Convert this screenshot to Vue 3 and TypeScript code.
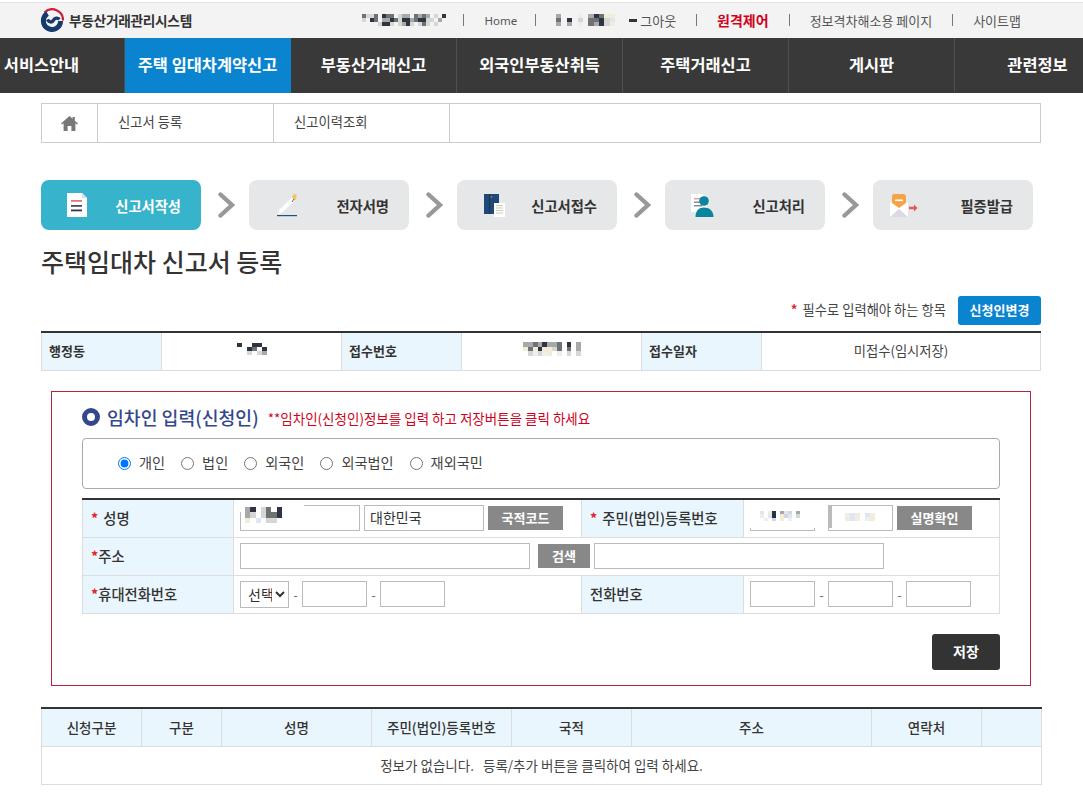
<script setup lang="ts">
interface Cell { x: number; y: number; c: string }
const palette: Record<string, string> = {
  a: '#2f3540', b: '#6f7275', c: '#a8a8a8', d: '#d6d6d6', e: '#f3ecd9', f: '#dde7f3', g: '#1f2f55', h: '#eeeeee'
}
function mosaic(rows: string[]): Cell[] {
  const out: Cell[] = []
  rows.forEach((r, y) => {
    r.split('').forEach((ch, x) => {
      if (palette[ch]) out.push({ x, y, c: palette[ch] })
    })
  })
  return out
}
const m1 = mosaic(['bddb.abb.dcc.bcbc.d.a', 'd.ab.ccabdaacbaadd.c.', '....daad.dcad.dbd.d..'])
const m2 = mosaic(['c...h.cabee..', 'b.a.d.bbadf..', 'c.c.h.bcade..'])
const m3 = mosaic(['a..aa.', '..ab.a', '..d.dc'])
const m4 = mosaic(['ccbcaccb.a.c', 'ebeaeedb.b.c', '.dhdhe.h.d.d'])
const m5 = mosaic(['ca.db.a.', 'cd.dbba.', 'e.f.dd..'])
const m6 = mosaic(['f.ea.cfd.c.', 'e.fg.edf.d.', '.h.d.e.h...'])
const m7 = mosaic(['.hfe.fe.', '.efh.he.'])

const topLinks = ['Home']
const navItems = ['서비스안내', '주택 임대차계약신고', '부동산거래신고', '외국인부동산취득', '주택거래신고', '게시판', '관련정보']
const steps = [
  { label: '신고서작성', pad: 'p1' },
  { label: '전자서명', pad: 'p2' },
  { label: '신고서접수', pad: 'p3' },
  { label: '신고처리', pad: 'p4' },
  { label: '필증발급', pad: 'p5' }
]
const radios = [
  { label: '개인', checked: true },
  { label: '법인', checked: false },
  { label: '외국인', checked: false },
  { label: '외국법인', checked: false },
  { label: '재외국민', checked: false }
]
const listCols = ['신청구분', '구분', '성명', '주민(법인)등록번호', '국적', '주소', '연락처', '']
const listWidths = [100, 80, 150, 140, 120, 240, 110, 60]
</script>

<template>
  <div class="page">
    <header class="top">
      <div class="logo">
        <svg width="24" height="24" viewBox="0 0 24 24">
          <path d="M4.5 4.5A10.8 10.8 0 0 1 23 12.5" fill="none" stroke="#c8213f" stroke-width="2.2" />
          <path d="M7.5 5.5A8.6 8.6 0 1 0 20.6 13" fill="none" stroke="#163a6b" stroke-width="5" />
          <path d="M7.5 11.5C9.5 15 12.6 14.4 13.8 11.8C14.8 9.8 17.6 9.4 19.4 11.4" fill="none" stroke="#163a6b" stroke-width="3.4" />
        </svg>
        <span>부동산거래관리시스템</span>
      </div>
      <nav class="links">
        <svg class="mos" width="84" height="12" viewBox="0 0 21 3" preserveAspectRatio="none" shape-rendering="crispEdges">
          <rect v-for="(p, i) in m1" :key="i" :x="p.x" :y="p.y" width="1" height="1" :fill="p.c" />
        </svg>
        <i class="sep first"></i>
        <a v-for="l in topLinks" :key="l" class="home">{{ l }}</a>
        <i class="sep"></i>
        <span class="logout">
          <svg class="mos" width="70" height="12" viewBox="0 0 13 3" preserveAspectRatio="none" shape-rendering="crispEdges">
            <rect v-for="(p, i) in m2" :key="i" :x="p.x" :y="p.y" width="1" height="1" :fill="p.c" />
          </svg>
          <b class="bar"></b>
          <a>그아웃</a>
        </span>
        <i class="sep"></i>
        <a class="remote">원격제어</a>
        <i class="sep"></i>
        <a>정보격차해소용 페이지</a>
        <i class="sep"></i>
        <a class="last">사이트맵</a>
      </nav>
    </header>

    <div class="navwrap">
      <ul class="nav">
        <li v-for="(n, i) in navItems" :key="n" :class="{ active: i === 1 }">{{ n }}</li>
      </ul>
    </div>

    <main class="main">
      <div class="tabs">
        <div class="tab home-tab">
          <svg width="17" height="15" viewBox="0 0 17 15">
            <path d="M8.5 0L0 7.6L1 8.6L2.6 7.3V15H6.6V10H10.4V15H14.4V7.3L16 8.6L17 7.6L13.8 4.8V1H11.6V2.8Z" fill="#777" />
          </svg>
        </div>
        <div class="tab">신고서 등록</div>
        <div class="tab">신고이력조회</div>
      </div>

      <div class="steps">
        <template v-for="(s, i) in steps" :key="s.label">
          <div class="step" :class="[{ on: i === 0 }, s.pad]">
            <svg width="40" height="30" viewBox="0 0 40 30">
              <g v-if="i === 0">
                <path d="M10 3H25L30 8V27H10Z" fill="#fff" />
                <path d="M25 3L30 8H25Z" fill="#dcdcdc" />
                <rect x="14" y="10" width="11" height="1.8" fill="#e8757a" />
                <rect x="14" y="15" width="11" height="1.8" fill="#4a4f60" />
                <rect x="14" y="19.5" width="11" height="1.8" fill="#33384a" />
              </g>
              <g v-else-if="i === 1">
                <path d="M14 20L27 7.5L30 10.5L17 22.5L13 24Z" fill="#fff" />
                <path d="M27 7.5L29 3.5L32 6L30 10.5Z" fill="#f3c64d" />
                <path d="M29 9L27 12" stroke="#2b3a55" stroke-width="0.8" />
                <rect x="12" y="25" width="20" height="1.2" fill="#24507e" />
              </g>
              <g v-else-if="i === 2">
                <rect x="11" y="4" width="15" height="20" fill="#1f4a78" />
                <rect x="16" y="4" width="1" height="20" fill="#163659" />
                <circle cx="18.5" cy="7" r="0.9" fill="#c9605f" />
                <rect x="21" y="13" width="11" height="14" fill="#fff" />
                <path d="M23 15.5H30M23 18H30M23 20.5H30M23 23H30" stroke="#c9c4a8" stroke-width="0.9" />
              </g>
              <g v-else-if="i === 3">
                <path d="M10 4H21L26 9V22H10Z" fill="#fff" />
                <rect x="13" y="8" width="7" height="1.4" fill="#e49aa0" />
                <rect x="13" y="11.5" width="8" height="1.4" fill="#7c8494" />
                <rect x="13" y="15" width="8" height="1.4" fill="#7c8494" />
                <circle cx="23" cy="11" r="4.8" fill="#0b84a0" />
                <path d="M14.5 27C14.5 20.5 18 17.5 23 17.5C28 17.5 32.5 20.5 32.5 27Z" fill="#0b84a0" />
              </g>
              <g v-else>
                <path d="M1 13L10 7L19 13V27H1Z" fill="#fff" />
                <path d="M1 27L10 19L19 27Z" fill="#dcd8e4" />
                <path d="M3 6C3 4 5 4 7 4H14C16 4 17 5 17 7V13L10 18L3 13Z" fill="#f5a345" />
                <rect x="6" y="9.5" width="8" height="1.6" fill="#fff" />
                <path d="M20 16.8H25V14.5L28.5 18L25 21.5V19.2H20Z" fill="#e8555f" />
              </g>
            </svg>
            <span>{{ s.label }}</span>
          </div>
          <div v-if="i < steps.length - 1" class="arrow">
            <svg width="17" height="26" viewBox="0 0 17 26">
              <path d="M2.5 2.5L14 13L2.5 23.5" fill="none" stroke="#999" stroke-width="4.4" stroke-linecap="round" stroke-linejoin="miter" />
            </svg>
          </div>
        </template>
      </div>

      <h1 class="title">주택임대차 신고서 등록</h1>

      <div class="req">
        <span><em>*</em> 필수로 입력해야 하는 항목</span>
        <button class="blue">신청인변경</button>
      </div>

      <table class="info">
        <colgroup>
          <col style="width:120px" /><col style="width:180px" /><col style="width:120px" />
          <col style="width:180px" /><col style="width:120px" /><col />
        </colgroup>
        <tbody>
          <tr>
            <th>행정동</th>
            <td>
              <svg width="30" height="12" viewBox="0 0 6 3" preserveAspectRatio="none" shape-rendering="crispEdges">
                <rect v-for="(p, i) in m3" :key="i" :x="p.x" :y="p.y" width="1" height="1" :fill="p.c" />
              </svg>
            </td>
            <th>접수번호</th>
            <td>
              <svg width="58" height="14" viewBox="0 0 12 3" preserveAspectRatio="none" shape-rendering="crispEdges">
                <rect v-for="(p, i) in m4" :key="i" :x="p.x" :y="p.y" width="1" height="1" :fill="p.c" />
              </svg>
            </td>
            <th>접수일자</th>
            <td>미접수(임시저장)</td>
          </tr>
        </tbody>
      </table>

      <section class="box">
        <div class="head">
          <i class="ring"></i>
          <h2>임차인 입력(신청인)</h2>
          <p>**임차인(신청인)정보를 입력 하고 저장버튼을 클릭 하세요</p>
        </div>

        <div class="radios">
          <label v-for="r in radios" :key="r.label">
            <input type="radio" name="kind" :checked="r.checked" />
            <span>{{ r.label }}</span>
          </label>
        </div>

        <table class="form">
          <colgroup>
            <col style="width:151px" /><col style="width:348px" /><col style="width:162px" /><col />
          </colgroup>
          <tbody>
            <tr class="r1">
              <th><em class="gap">*</em>성명</th>
              <td>
                <div class="fields">
                  <span class="masked">
                    <input class="w120" type="text" />
                    <b class="cover c-name"></b>
                    <svg class="over o-name" width="42" height="16" viewBox="0 0 8 3" preserveAspectRatio="none" shape-rendering="crispEdges">
                      <rect v-for="(p, i) in m5" :key="i" :x="p.x" :y="p.y" width="1" height="1" :fill="p.c" />
                    </svg>
                  </span>
                  <input class="w120" type="text" value="대한민국" />
                  <button class="gray w75">국적코드</button>
                </div>
              </td>
              <th><em class="gap">*</em>주민(법인)등록번호</th>
              <td>
                <div class="fields">
                  <span class="masked">
                    <input class="w65" type="text" />
                    <b class="cover c-id"></b>
                    <svg class="over o-id" width="44" height="10" viewBox="0 0 11 3" preserveAspectRatio="none" shape-rendering="crispEdges">
                      <rect v-for="(p, i) in m6" :key="i" :x="p.x" :y="p.y" width="1" height="1" :fill="p.c" />
                    </svg>
                  </span>
                  <span class="spacer"></span>
                  <span class="masked">
                    <input class="w65" type="text" />
                    <b class="thick"></b>
                    <svg class="over o-id2" width="40" height="8" viewBox="0 0 8 2" preserveAspectRatio="none" shape-rendering="crispEdges">
                      <rect v-for="(p, i) in m7" :key="i" :x="p.x" :y="p.y" width="1" height="1" :fill="p.c" />
                    </svg>
                  </span>
                  <button class="gray w75">실명확인</button>
                </div>
              </td>
            </tr>
            <tr class="r2">
              <th><em>*</em>주소</th>
              <td colspan="3">
                <div class="fields">
                  <input class="w290" type="text" />
                  <button class="gray w52">검색</button>
                  <input class="w290" type="text" />
                </div>
              </td>
            </tr>
            <tr class="r3">
              <th><em>*</em>휴대전화번호</th>
              <td>
                <div class="fields">
                  <select class="sel"><option>선택</option></select>
                  <span class="dash">-</span>
                  <input class="w65" type="text" />
                  <span class="dash">-</span>
                  <input class="w65" type="text" />
                </div>
              </td>
              <th>전화번호</th>
              <td>
                <div class="fields">
                  <input class="w65" type="text" />
                  <span class="dash">-</span>
                  <input class="w65" type="text" />
                  <span class="dash">-</span>
                  <input class="w65" type="text" />
                </div>
              </td>
            </tr>
          </tbody>
        </table>

        <div class="actions">
          <button class="save">저장</button>
        </div>
      </section>

      <table class="list">
        <colgroup>
          <col v-for="(w, i) in listWidths" :key="i" :style="{ width: w + 'px' }" />
        </colgroup>
        <thead>
          <tr>
            <th v-for="(c, i) in listCols" :key="i">{{ c }}</th>
          </tr>
        </thead>
        <tbody>
          <tr>
            <td :colspan="listCols.length">정보가 없습니다. &nbsp; 등록/추가 버튼을 클릭하여 입력 하세요.</td>
          </tr>
        </tbody>
      </table>
    </main>
  </div>
</template>

<style>
html, body { margin: 0; background: #fff; }
</style>

<style scoped>
.page {
  width: 1083px;
  overflow: hidden;
  font-family: "Noto Sans CJK KR", "Noto Sans", sans-serif;
  font-size: 13px;
  color: #333;
}
.top {
  box-sizing: border-box;
  height: 38px;
  margin-top: 0;
  border-top: 2px solid #fff;
  background: #f3f3f3;
  box-shadow: inset 0 1px 0 #e2e2e2;
  display: flex;
  align-items: center;
  justify-content: space-between;
  padding: 0 62px 0 40px;
}
.logo { display: flex; align-items: center; gap: 5px; font-weight: 700; font-size: 13.7px; letter-spacing: -0.3px; color: #333; }
.links { display: flex; align-items: center; gap: 20px; font-size: 13px; color: #555; }
.mos { display: block; }
.sep { width: 1px; height: 12px; background: #777; }
.sep.first { margin-left: -3px; }
.home { font-family: "Noto Sans", sans-serif; font-size: 11.5px; margin: 0 -2px 0 1px; }
.logout { display: flex; align-items: center; gap: 3px; }
.bar { width: 8px; height: 3px; background: #333; margin-left: 0; }
.remote { color: #d0021b; font-weight: 700; font-size: 14px; }
.navwrap { height: 55px; background: #393939; overflow: hidden; }
.nav { display: flex; list-style: none; margin: 0 0 0 -41px; padding: 0; width: 1162px; }
.nav li {
  box-sizing: border-box;
  width: 166px;
  height: 55px;
  line-height: 52px;
  text-align: center;
  color: #fff;
  font-size: 16.4px;
  font-weight: 700;
  border-right: 1px solid #4f4f4f;
}
.nav li.active { background: #0a84ce; border-right-color: #0a84ce; }
.main { width: 1000px; margin-left: 41px; }
.tabs { margin-top: 10px; display: flex; height: 40px; box-sizing: border-box; border: 1px solid #ccc; }
.tab {
  box-sizing: border-box;
  width: 176px;
  padding-left: 20px;
  line-height: 35px;
  border-right: 1px solid #ccc;
  font-size: 13.3px;
  color: #444;
}
.home-tab { width: 56px; padding: 0; display: flex; align-items: center; justify-content: center; }
.steps { margin-top: 37px; display: flex; }
.step {
  box-sizing: border-box;
  width: 160px;
  height: 50px;
  border-radius: 8px;
  background: #e6e7e9;
  display: flex;
  align-items: center;
  justify-content: space-between;
  padding: 0 20px 0 16px;
  font-size: 14.3px;
  font-weight: 700;
  color: #333;
}
.step.on { background: #37b3cb; color: #fff; }
.arrow { width: 48px; display: flex; align-items: center; justify-content: center; padding-left: 3px; box-sizing: border-box; }
.title { margin: 16px 0 0; height: 32px; line-height: 30px; font-size: 25px; font-weight: 500; color: #333; }
.req { margin-top: 18px; display: flex; justify-content: flex-end; align-items: center; gap: 12px; height: 29px; font-size: 13.3px; color: #444; }
.req span { padding-bottom: 2px; }
.req em { margin-right: 2px; }
.req em, .form em { color: #e0262e; font-style: normal; font-weight: 700; }
.blue {
  width: 83px; height: 29px; border: 0; border-radius: 3px; background: #0a84ce; color: #fff;
  font: 700 13px "Noto Sans CJK KR", sans-serif; padding: 0 0 2px;
}
table { border-collapse: collapse; table-layout: fixed; }
.info { margin-top: 6px; width: 1000px; height: 40px; border-top: 2px solid #333; border-bottom: 1px solid #ddd; }
.info th { background: #eaf6fd; text-align: left; padding: 0 0 2px 7px; font-size: 13px; font-weight: 700; border: 1px solid #ddd; border-top: 0; border-bottom: 0; }
.info td { text-align: center; border: 1px solid #ddd; border-top: 0; border-bottom: 0; font-size: 13.3px; color: #444; padding: 0 0 2px; }
.info svg { display: block; margin: 0 auto 4px; }
.box {
  margin: 20px 0 0 10px;
  width: 980px;
  box-sizing: border-box;
  height: 295px;
  border: 1px solid #b0243c;
  padding: 0 30px;
}
.head { display: flex; align-items: center; height: 46px; padding-top: 3px; box-sizing: border-box; }
.ring { box-sizing: border-box; width: 18px; height: 18px; border-radius: 50%; border: 5px solid #34478c; margin-right: 7px; }
.head h2 { margin: 0; font-size: 18.3px; font-weight: 500; color: #34478c; }
.head p { margin: 3px 0 0 9px; font-size: 13.5px; color: #d0021b; }
.radios {
  box-sizing: border-box;
  height: 51px;
  border: 1px solid #aaa;
  border-radius: 4px;
  display: flex;
  align-items: center;
  padding-left: 35px;
  gap: 16px;
}
.radios label { display: flex; align-items: center; gap: 8px; font-size: 14.2px; color: #444; }
.radios input { margin: 0; width: 13px; height: 13px; }
.radios span { margin-top: -3px; }
.form { margin-top: 9px; width: 918px; border-top: 2px solid #333; }
.form th {
  background: #eaf6fd;
  text-align: left;
  padding: 0 0 2px 8px;
  font-size: 14.3px;
  font-weight: 500;
  color: #333;
  border: 1px solid #ddd;
  border-top: 0;
}
.form em.gap { margin-right: 5px; }
.form td { padding: 0 0 0 6px; border: 1px solid #ddd; border-top: 0; }
.r1 { height: 38px; }
.r2 { height: 38px; }
.r3 { height: 38px; }
.fields { display: flex; align-items: center; gap: 4px; }
input[type="text"] {
  box-sizing: border-box;
  height: 26px;
  border: 1px solid #bbb;
  padding: 0 5px 2px;
  margin: 0;
  font: 14px "Noto Sans CJK KR", sans-serif;
  color: #333;
  background: #fff;
}
.w120 { width: 120px; }
.w65 { width: 65px; }
.w290 { width: 290px; }
.masked { position: relative; display: block; height: 26px; }
.masked input { display: block; }
.cover { position: absolute; background: #fff; }
.c-name { left: 0; top: -1px; width: 64px; height: 8px; }
.c-id { left: -1px; top: -1px; width: 67px; height: 24px; }
.over { position: absolute; }
.o-name { left: 5px; top: 2px; }
.o-id { left: 10px; top: 6px; }
.o-id2 { left: 12px; top: 8px; }
.thick { position: absolute; left: 0; top: 0; width: 4px; height: 23px; background: #bbb; }
.spacer { width: 5px; }
button.gray {
  height: 24px;
  border: 0;
  background: #888;
  color: #fff;
  font: 700 13px "Noto Sans CJK KR", sans-serif;
  padding: 0 0 2px;
}
.w75 { width: 75px; }
.w52 { width: 52px; margin-left: 4px; }
.sel {
  box-sizing: border-box;
  width: 49px;
  height: 27px;
  border: 1px solid #bbb;
  background: #fff;
  font: 14px "Noto Sans CJK KR", sans-serif;
  color: #333;
  padding: 0 0 0 3px;
}
.dash { width: 5px; text-align: center; font-size: 12px; color: #555; }
.actions { margin-top: 20px; display: flex; justify-content: flex-end; }
.save {
  width: 68px; height: 36px; border: 0; border-radius: 3px; background: #333;
  color: #fff; font: 700 14px "Noto Sans CJK KR", sans-serif; padding: 0 0 2px;
}
.list { margin-top: 21px; width: 1000px; border-top: 2px solid #333; }
.list th {
  height: 35px;
  padding: 0 0 2px;
  background: #eaf6fd;
  font-size: 13.5px;
  font-weight: 500;
  border: 1px solid #ddd;
  border-top: 0;
}
.list td { height: 35px; text-align: center; padding: 0 0 2px; font-size: 13.5px; color: #444; border: 1px solid #ddd; border-top: 0; }
</style>
